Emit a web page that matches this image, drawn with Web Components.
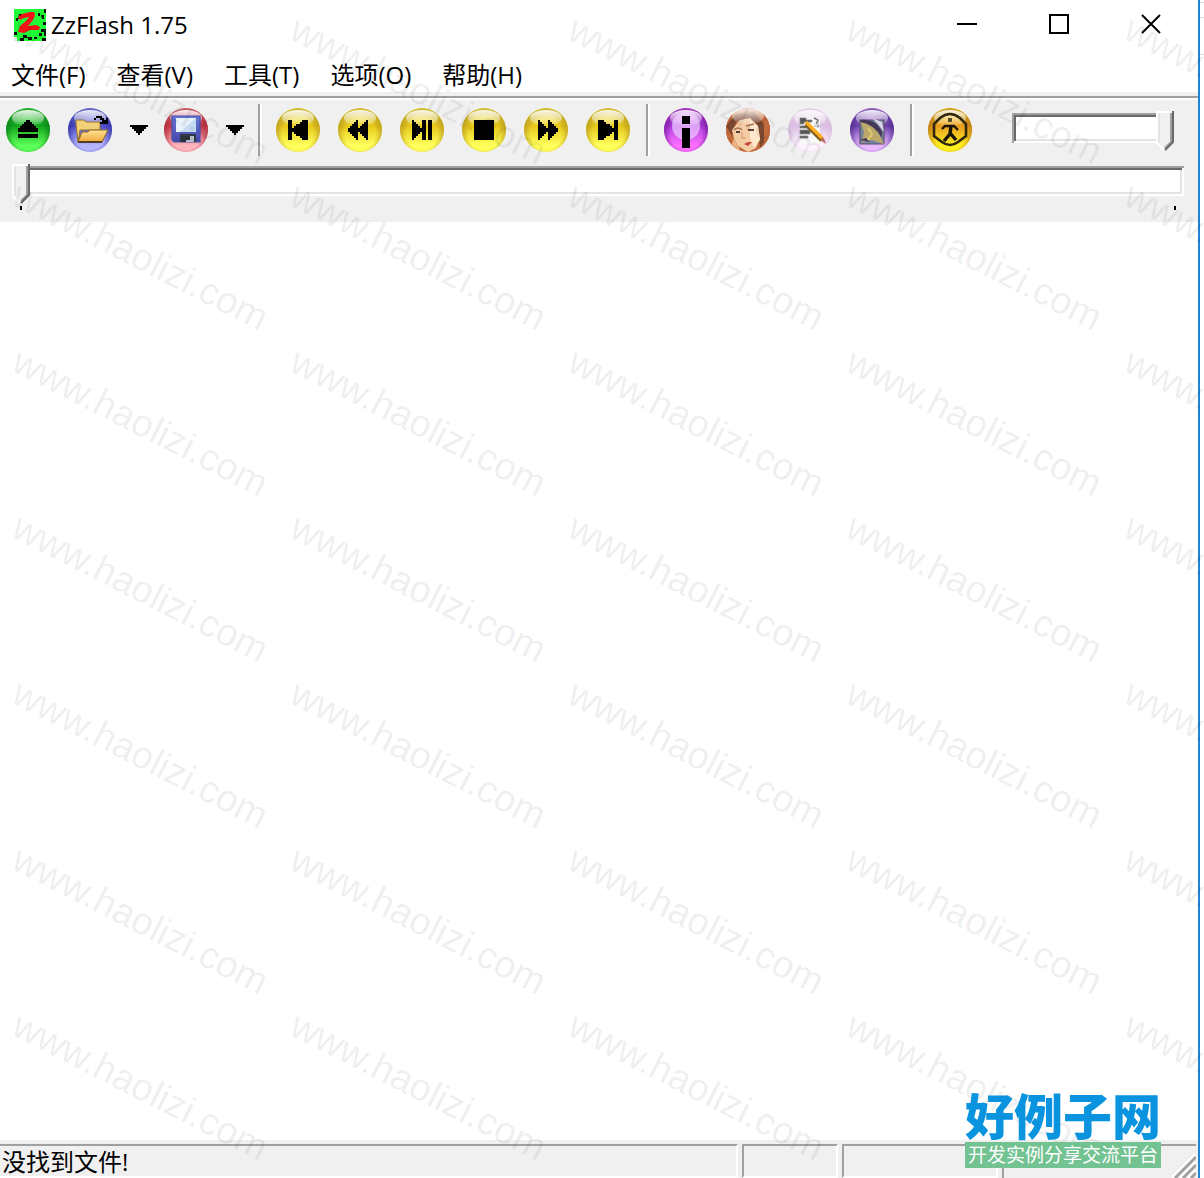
<!DOCTYPE html>
<html lang="zh-CN">
<head>
<meta charset="utf-8">
<meta name="viewport" content="width=device-width, initial-scale=1">
<title>ZzFlash 1.75</title>
<style>
  body {
    margin: 0;
    background: #fff;
    color: #000;
    font-family: "Open Sans", "Noto Sans CJK SC", sans-serif;
    font-size: 24px;
    line-height: 32px;
  }
</style>
</head>
<body>
<player-window>
  <title-bar slot="title">ZzFlash 1.75</title-bar>
  <menu-bar slot="menu">
    <menu-entry>文件(F)</menu-entry>
    <menu-entry>查看(V)</menu-entry>
    <menu-entry>工具(T)</menu-entry>
    <menu-entry>选项(O)</menu-entry>
    <menu-entry>帮助(H)</menu-entry>
  </menu-bar>
  <tool-bar slot="tools">
    <tool-group>
      <tool-button icon="eject" label="弹出"></tool-button>
      <tool-button icon="open" label="打开"></tool-button>
      <drop-arrow label="最近打开"></drop-arrow>
      <tool-button icon="save" label="保存"></tool-button>
      <drop-arrow label="保存选项"></drop-arrow>
    </tool-group>
    <tool-divider></tool-divider>
    <tool-group>
      <tool-button icon="first" label="第一帧"></tool-button>
      <tool-button icon="rewind" label="后退"></tool-button>
      <tool-button icon="play" label="播放/暂停"></tool-button>
      <tool-button icon="stop" label="停止"></tool-button>
      <tool-button icon="forward" label="前进"></tool-button>
      <tool-button icon="last" label="最后一帧"></tool-button>
    </tool-group>
    <tool-divider></tool-divider>
    <tool-group>
      <tool-button icon="info" label="信息"></tool-button>
      <tool-button icon="face" label="图像"></tool-button>
      <tool-button icon="edit" label="编辑"></tool-button>
      <tool-button icon="picture" label="截图"></tool-button>
    </tool-group>
    <tool-divider></tool-divider>
    <tool-group>
      <tool-button icon="exit" label="退出"></tool-button>
    </tool-group>
    <track-bar slot="volume" label="音量" value="100"></track-bar>
  </tool-bar>
  <seek-bar slot="seek"></seek-bar>
  <status-bar slot="status">没找到文件!</status-bar>
</player-window>

<script>
const define = (name, html, setup) => {
  customElements.define(name, class extends HTMLElement {
    constructor() {
      super();
      this.attachShadow({ mode: 'open' }).innerHTML = html;
    }
    connectedCallback() {
      if (setup) setup(this, this.shadowRoot);
    }
  });
};

// Each glyph sits on a 22 x 22 grid, drawn at twice its size.
const yellow = ['#b09020', '#e6c818', '#ffff5c'];
const icons = {
  eject: [['#087818', '#12a51c', '#5cff58'],
    '<path d="M10 6h2v1h1v1h1v1h1v1h1v2H6v-2h1V9h1V8h1V7h1zM6 13h10v2H6z"/>'],
  open: [['#3030a0', '#4b4bc8', '#b4b4ff'],
    `<path d="M4 8V6h4l1 1h7v4H6l-1 6z" fill="#f0d078" stroke="#9a7428" stroke-width=".5"/>
     <path d="M5 17 7 12h3l1-1h9l-3 6z" fill="url(#folder)" stroke="#8c6420" stroke-width=".5"/>
     <path d="M5 17h12" stroke="#302008" stroke-width=".7"/>
     <path d="M13 6V5h1V4h3v1h1v1h1V5h1v3h-4V7h1V6h-1V5h-2v1z"/>`],
  save: [['#a42434', '#cc4050', '#ffb4bc'],
    `<path d="M4 4h14v13H5l-1-1z" fill="url(#disk)" stroke="#4450ac" stroke-width=".6"/>
     <path d="M6 5h10v7H6z" fill="#e8f2fb"/><path d="M16 5v7H8z" fill="#c4daf0"/>
     <path d="M8 13h8v4H8z" fill="#303848"/><path d="M9 14h6v3H9z" fill="#b4bbc4"/>
     <path d="M9 14h2v3H9zM11 14h2v2h-2z" fill="#283038"/>`],
  first: [yellow, '<path d="M6 6h2v4h1V9h1V8h2V7h1V6h3v10h-3v-1h-1v-1h-2v-1H9v-1H8v4H6z"/>'],
  rewind: [yellow, '<path d="M9 6h1v4h1V9h1V8h1V7h1V6h1v10h-1v-1h-1v-1h-1v-1h-1v-1h-1v4H9v-1H8v-1H7v-1H6v-1H5v-2h1V9h1V8h1V7h1z"/>'],
  play: [yellow, '<path d="M6 6h1v1h1v1h1v1h1v1h1V6h2v10h-2v-4h-1v1H9v1H8v1H7v1H6zM14 6h2v10h-2z"/>'],
  stop: [yellow, '<path d="M6 6h10v10H6z"/>'],
  forward: [yellow, '<path d="M7 6h1v1h1v1h1v1h1v1h1V6h1v1h1v1h1v1h1v1h1v2h-1v1h-1v1h-1v1h-1v1h-1v-4h-1v1h-1v1H9v1H8v1H7z"/>'],
  last: [yellow, '<path d="M6 6h3v1h1v1h2v1h1v1h1V6h2v10h-2v-4h-1v1h-1v1h-2v1H9v1H6z"/>'],
  info: [['#681090', '#b040e0', '#ff70ff'],
    '<circle cx="11" cy="9" r="7" fill="#f0d4ff" opacity=".65"/><path d="M9 4h4v4H9zM9 10h4v10H9z"/>'],
  face: [['#b06040', '#c06030', '#e89058'],
    `<g clip-path="url(#round)">
       <path d="M0 0h22v22H0z" fill="#c06a3c"/>
       <path d="M0 9 5 3l9-1 5 6 0 9-2 3-1-10-5-4-6 1-2 7z" fill="#7c4830"/>
       <path d="M3 11 7 6l5-1 4 4 1 6-2 5-4 2-5-3-2-4z" fill="#f4cca4"/>
       <path d="M12 6 16 9l1 7-3 4-2-5z" fill="#ffe8cc"/>
       <path d="M4 11q2-2 4 0M10 9l4-1" fill="none" stroke="#a87050" stroke-width=".7"/>
       <path d="M5 12h2M11 11h3" stroke="#58403c" stroke-width=".9"/>
       <path d="M8 12v3h2" fill="none" stroke="#d89870" stroke-width=".6"/>
       <path d="M9 18l2-1 2 0-2 2z" fill="#c8443c"/>
       <path d="M4 15l3 6H2z" fill="#ecb484"/>
     </g>`],
  edit: [['#d8b8dc', '#dcc0e4', '#fff4ff'],
    `<path d="M6 5h6l1 1 3-1v13H6z" fill="#f8f8f8"/>
     <path d="M6 5h3v1h3v1H8v1H6zM6 9h5v1H6zM6 11h5v2H6zM6 14h4v1H6zM15 6v4M13 9h3" fill="#555" stroke="#888" stroke-width=".4"/>
     <path d="m13 5 2 1-1 2" fill="none" stroke="#777" stroke-width=".7"/>
     <path d="m9 8 8 8" stroke="#806020" stroke-width="2.4"/>
     <path d="m9 7 8 8" stroke="#ffac20" stroke-width="1.6"/>
     <path d="m16 16 2-1 1 3z" fill="#c06860"/>`],
  picture: [['#482088', '#7044b0', '#eab8ff'],
    `<path d="M5 6h12v12H5z" fill="#76849c" stroke="#605070" stroke-width=".6"/>
     <path d="M5 6q7 0 9 6l3 6-6-2-5 1 1-5z" fill="#bca868"/>
     <path d="M5 6q8-1 11 6v3q-4-7-11-8zM5 16l3-1 2 2" fill="#443858"/>
     <path d="m11 5 5 2 1 5-3-4z" fill="#ddd4ec"/><path d="m9 10 2 3-2 3" fill="none" stroke="#dfca70"/>`],
  exit: [['#b07010', '#e89c20', '#fff020'],
    `<path d="M6 5Q11 1 16 5L19 8V14L15 17Q11 20 7 17L3 14V8Z" fill="none" stroke="#30280c" stroke-width="1.3"/>
     <path d="M10 5h2v2h-2z" fill="#554c30"/>
     <path d="M7 10.5 8.5 9H13l2 2" fill="none" stroke="#181408" stroke-width="1.2"/>
     <path d="m11.500 9-.5 4-3 3.500M11 12.500l3 3.500" fill="none" stroke="#181408" stroke-width="1.7"/>`]
};

const sphere = ([edge, dark, light], glyph) => `
  <svg viewBox="0 0 22 22" aria-hidden="true">
    <defs>
      <linearGradient id="fill" x2="0" y2="1">
        <stop offset="0" stop-color="${light}"/><stop offset=".4" stop-color="${dark}"/><stop offset=".85" stop-color="${light}"/>
      </linearGradient>
      <radialGradient id="rim" cy=".6">
        <stop offset=".7" stop-color="${edge}" stop-opacity="0"/><stop offset="1" stop-color="${edge}" stop-opacity=".6"/>
      </radialGradient>
      <linearGradient id="shine" x2="0" y2="1">
        <stop offset="0" stop-color="#fff" stop-opacity=".9"/><stop offset="1" stop-color="#fff" stop-opacity=".1"/>
      </linearGradient>
      <linearGradient id="folder" x2="0" y2="1"><stop stop-color="#ffe494"/><stop offset="1" stop-color="#eea83c"/></linearGradient>
      <linearGradient id="disk" x2="0" y2="1"><stop stop-color="#6878d8"/><stop offset="1" stop-color="#4448a8"/></linearGradient>
      <clipPath id="round"><circle cx="11" cy="11" r="11"/></clipPath>
    </defs>
    <circle cx="11" cy="11" r="11" fill="url(#fill)"/>
    <circle cx="11" cy="11" r="11" fill="url(#rim)"/>
    <ellipse cx="11" cy="5" rx="8" ry="4" fill="url(#shine)"/>
    ${glyph}
    ${glyph.includes('#round') ? '<ellipse cx="11" cy="4" rx="8" ry="4" fill="url(#shine)"/>' : ''}
  </svg>`;

define('player-window', `
  <style>
    :host {
      display: flex;
      position: relative;
      min-height: 100vh;
      overflow: hidden;
    }
    main {
      flex: 1;
      min-width: 0;
      display: flex;
      flex-direction: column;
    }
    .stage {
      flex: 1;
      background: #fff;
    }
    .desktop {
      width: 4px;
      border-left: 2px solid #1f83d6;
      background: linear-gradient(#d8dce4, #d8dce4) 0 2px / 4px 1px no-repeat,
                  linear-gradient(#d8dce4, #d8dce4) 0 17px / 4px 1px no-repeat,
                  linear-gradient(#d8dce4, #d8dce4) 0 54px / 4px 1px no-repeat,
                  #fff;
    }
  </style>
  <main>
    <slot name="title"></slot>
    <slot name="menu"></slot>
    <slot name="tools"></slot>
    <slot name="seek"></slot>
    <div class="stage"></div>
    <slot name="status"></slot>
  </main>
  <div class="desktop"></div>
  <water-mark></water-mark>
  <site-logo></site-logo>
`);

define('title-bar', `
  <style>
    :host {
      display: flex;
      align-items: center;
      height: 50px;
      padding: 0 1px 0 14px;
      background: #fff;
    }
    h1 {
      flex: 1;
      margin: 0 0 0 5px;
      font-size: 24px;
      font-weight: 400;
    }
    button {
      align-self: flex-start;
      width: 92px;
      height: 48px;
      padding: 0;
      border: 0;
      background: none;
    }
    button svg {
      display: block;
      margin: auto;
    }
  </style>
  <svg width="32" height="32" viewBox="0 0 32 32" aria-hidden="true">
    <path d="M0 0h32v32H0z" fill="#20fb38"/>
    <path d="M5 5h4v2H6v3H4zM2 9h2v3H2zM24 4h2v3h-2zM27 6h3v4h-2zM29 13h3v3h-3zM27 20h5v7h-2v-4h-3zM25 24h3v3h-3zM9 26h4v2h5v3h-4v-2h-4v3H6v-3h3zM0 23h3v3H0zM28 29h4v3h-4zM20 28h3v2h-3zM30 0h2v4h-2z" fill="#0b1408"/>
    <path d="M0 28h3v4H0z" fill="#eee"/>
    <path d="M4 8 8 5 16 3h4l1 3-2 5-5 6 8-1 4 2-1 3-9 0-6 3-6-1 2-6 6-5 3-4-5 1-4 2z" fill="#f41418"/>
  </svg>
  <h1><slot></slot></h1>
  <button aria-label="最小化"><svg width="20" height="20"><path d="M0 10h20" stroke="#000" stroke-width="2"/></svg></button>
  <button aria-label="最大化"><svg width="20" height="20"><path d="M1 1h18v18H1z" fill="none" stroke="#000" stroke-width="2"/></svg></button>
  <button aria-label="关闭"><svg width="20" height="20"><path d="m1 1 18 18M19 1 1 19" stroke="#000" stroke-width="2"/></svg></button>
`);

define('menu-bar', `
  <style>
    :host {
      display: block;
      background: #fff;
      border-bottom: 4px solid #f0f0f0;
    }
    nav {
      display: flex;
      gap: 31px;
      height: 42px;
      padding: 0 11px;
    }
  </style>
  <nav><slot></slot></nav>
`);

define('menu-entry', `
  <style>
    :host { display: block; }
    button {
      height: 50px;
      padding: 0;
      border: 0;
      background: none;
      color: inherit;
      font: inherit;
      white-space: nowrap;
    }
  </style>
  <button><slot></slot></button>
`);

define('tool-bar', `
  <style>
    :host {
      display: flex;
      align-items: center;
      height: 60px;
      padding: 0 24px 0 6px;
      border-top: 2px solid #a0a0a0;
      box-shadow: inset 0 2px #fff;
      background: #f0f0f0;
    }
    .volume {
      width: 162px;
      margin: 0 0 0 auto;
    }
  </style>
  <slot></slot>
  <div class="volume"><slot name="volume"></slot></div>
`);

define('tool-group', `
  <style>
    :host {
      display: flex;
      align-items: center;
      gap: 18px;
      padding-top: 4px;
    }
  </style>
  <slot></slot>
`);

define('tool-divider', `
  <style>
    :host {
      width: 2px;
      height: 52px;
      margin: 4px 14px 0 16px;
      border-left: 2px solid #a0a0a0;
      background: #fff;
    }
  </style>
`);

define('tool-button', `
  <style>
    :host { display: block; }
    button {
      display: block;
      width: 44px;
      height: 44px;
      padding: 0;
      border: 0;
      background: none;
    }
    svg {
      display: block;
      width: 44px;
      height: 44px;
    }
  </style>
  <button></button>
`, (host, root) => {
  const button = root.querySelector('button');
  button.setAttribute('aria-label', host.getAttribute('label'));
  button.innerHTML = sphere(...icons[host.getAttribute('icon')]);
});

define('drop-arrow', `
  <style>
    :host { display: block; }
    button {
      display: block;
      width: 16px;
      height: 44px;
      padding: 0;
      border: 0;
      background: none;
    }
    svg {
      display: block;
      overflow: visible;
    }
  </style>
  <button><svg width="16" height="10" shape-rendering="crispEdges" aria-hidden="true">
    <path d="M0 0h18v2h-2v2h-2v2h-2v2h-2v2H8V8H6V6H4V4H2V2H0z"/>
  </svg></button>
`, (host, root) => {
  root.querySelector('button').setAttribute('aria-label', host.getAttribute('label'));
});

define('track-bar', `
  <style>
    :host { display: block; }
    input {
      display: block;
      width: 100%;
      height: 30px;
      margin: 0;
      background: none;
      -webkit-appearance: none;
    }
    input::-webkit-slider-runnable-track {
      height: 30px;
      background: #fff;
      box-shadow: inset 2px 2px #a0a0a0, inset -2px -2px #fff, inset 4px 4px #696969, inset -4px -4px #e3e3e3;
    }
    input::-webkit-slider-thumb {
      -webkit-appearance: none;
      width: 18px;
      height: 40px;
      margin-top: -2px;
      border: 0;
      border-radius: 0;
      background: url("data:image/svg+xml,%3Csvg xmlns='http://www.w3.org/2000/svg' width='18' height='40'%3E%3Cpath d='M0 0h18v32l-8 8H8l-8-8z' fill='%23f0f0f0'/%3E%3Cpath d='M1 0v32l7 7M0 1h16' fill='none' stroke='%23fff' stroke-width='2'/%3E%3Cpath d='M3 2v30' stroke='%23e3e3e3' stroke-width='2'/%3E%3Cpath d='M15 2v29l-6 6' fill='none' stroke='%23a0a0a0' stroke-width='2'/%3E%3Cpath d='M17 0v31l-8 8' fill='none' stroke='%23696969' stroke-width='2'/%3E%3C/svg%3E") no-repeat;
    }
  </style>
  <input type="range" min="0" max="100">
`, (host, root) => {
  const input = root.querySelector('input');
  input.value = host.getAttribute('value');
  input.setAttribute('aria-label', host.getAttribute('label'));
});

define('seek-bar', `
  <style>
    :host {
      display: block;
      padding: 8px 14px 12px 12px;
      background: #f0f0f0;
    }
    .ticks {
      display: flex;
      justify-content: space-between;
      padding: 10px 8px 0;
    }
    .ticks i {
      width: 2px;
      height: 4px;
      background: #000;
    }
  </style>
  <track-bar label="进度" value="0"></track-bar>
  <div class="ticks"><i></i><i></i></div>
`);

define('status-bar', `
  <style>
    :host {
      display: flex;
      gap: 4px;
      height: 34px;
      padding: 4px 2px 0 0;
      background: #f0f0f0;
    }
    div {
      box-sizing: border-box;
      height: 34px;
      border: 2px solid;
      border-color: #a0a0a0 #fff #fff #a0a0a0;
    }
    .message {
      flex: 1;
      padding-left: 2px;
      border-left: 0;
    }
    .short { width: 96px; }
    .long { width: 156px; }
    .last {
      display: flex;
      justify-content: flex-end;
      align-items: flex-end;
      width: 194px;
      border-right: 0;
      border-bottom: 0;
    }
  </style>
  <div class="message"><slot></slot></div>
  <div class="short"></div>
  <div class="long"></div>
  <div class="last">
    <svg width="24" height="24" aria-hidden="true">
      <path d="M0 24 24 0M8 24 24 8M16 24l8-8" stroke="#fff" stroke-width="3"/>
      <path d="M3 24 24 3M11 24l13-13M19 24l5-5" stroke="#a0a0a0" stroke-width="3"/>
    </svg>
  </div>
`);

define('water-mark', `
  <style>
    :host {
      position: absolute;
      inset: 0;
      overflow: hidden;
      display: grid;
      grid-template-columns: repeat(5, 278px);
      grid-auto-rows: 166px;
      align-content: start;
      padding: 5px 0 0 10px;
      color: rgba(0, 0, 0, .075);
      font-family: "Liberation Sans", sans-serif;
      font-size: 38px;
      line-height: 40px;
      pointer-events: none;
    }
    span {
      white-space: nowrap;
      transform: rotate(27deg);
      transform-origin: 0 32px;
    }
  </style>
`, (host, root) => {
  for (let i = 0; i < 35; i++) {
    const span = document.createElement('span');
    span.textContent = 'www.haolizi.com';
    root.append(span);
  }
});

define('site-logo', `
  <style>
    :host {
      position: absolute;
      right: 43px;
      bottom: 10px;
      text-align: center;
      white-space: nowrap;
      pointer-events: none;
    }
    strong {
      display: block;
      color: #0a94e0;
      font: 900 49px/56px "Noto Sans CJK SC", sans-serif;
    }
    small {
      display: block;
      background: #72c292;
      color: #fff;
      font-size: 19px;
      line-height: 26px;
    }
  </style>
  <strong>好例子网</strong>
  <small>开发实例分享交流平台</small>
`);
</script>
</body>
</html>
